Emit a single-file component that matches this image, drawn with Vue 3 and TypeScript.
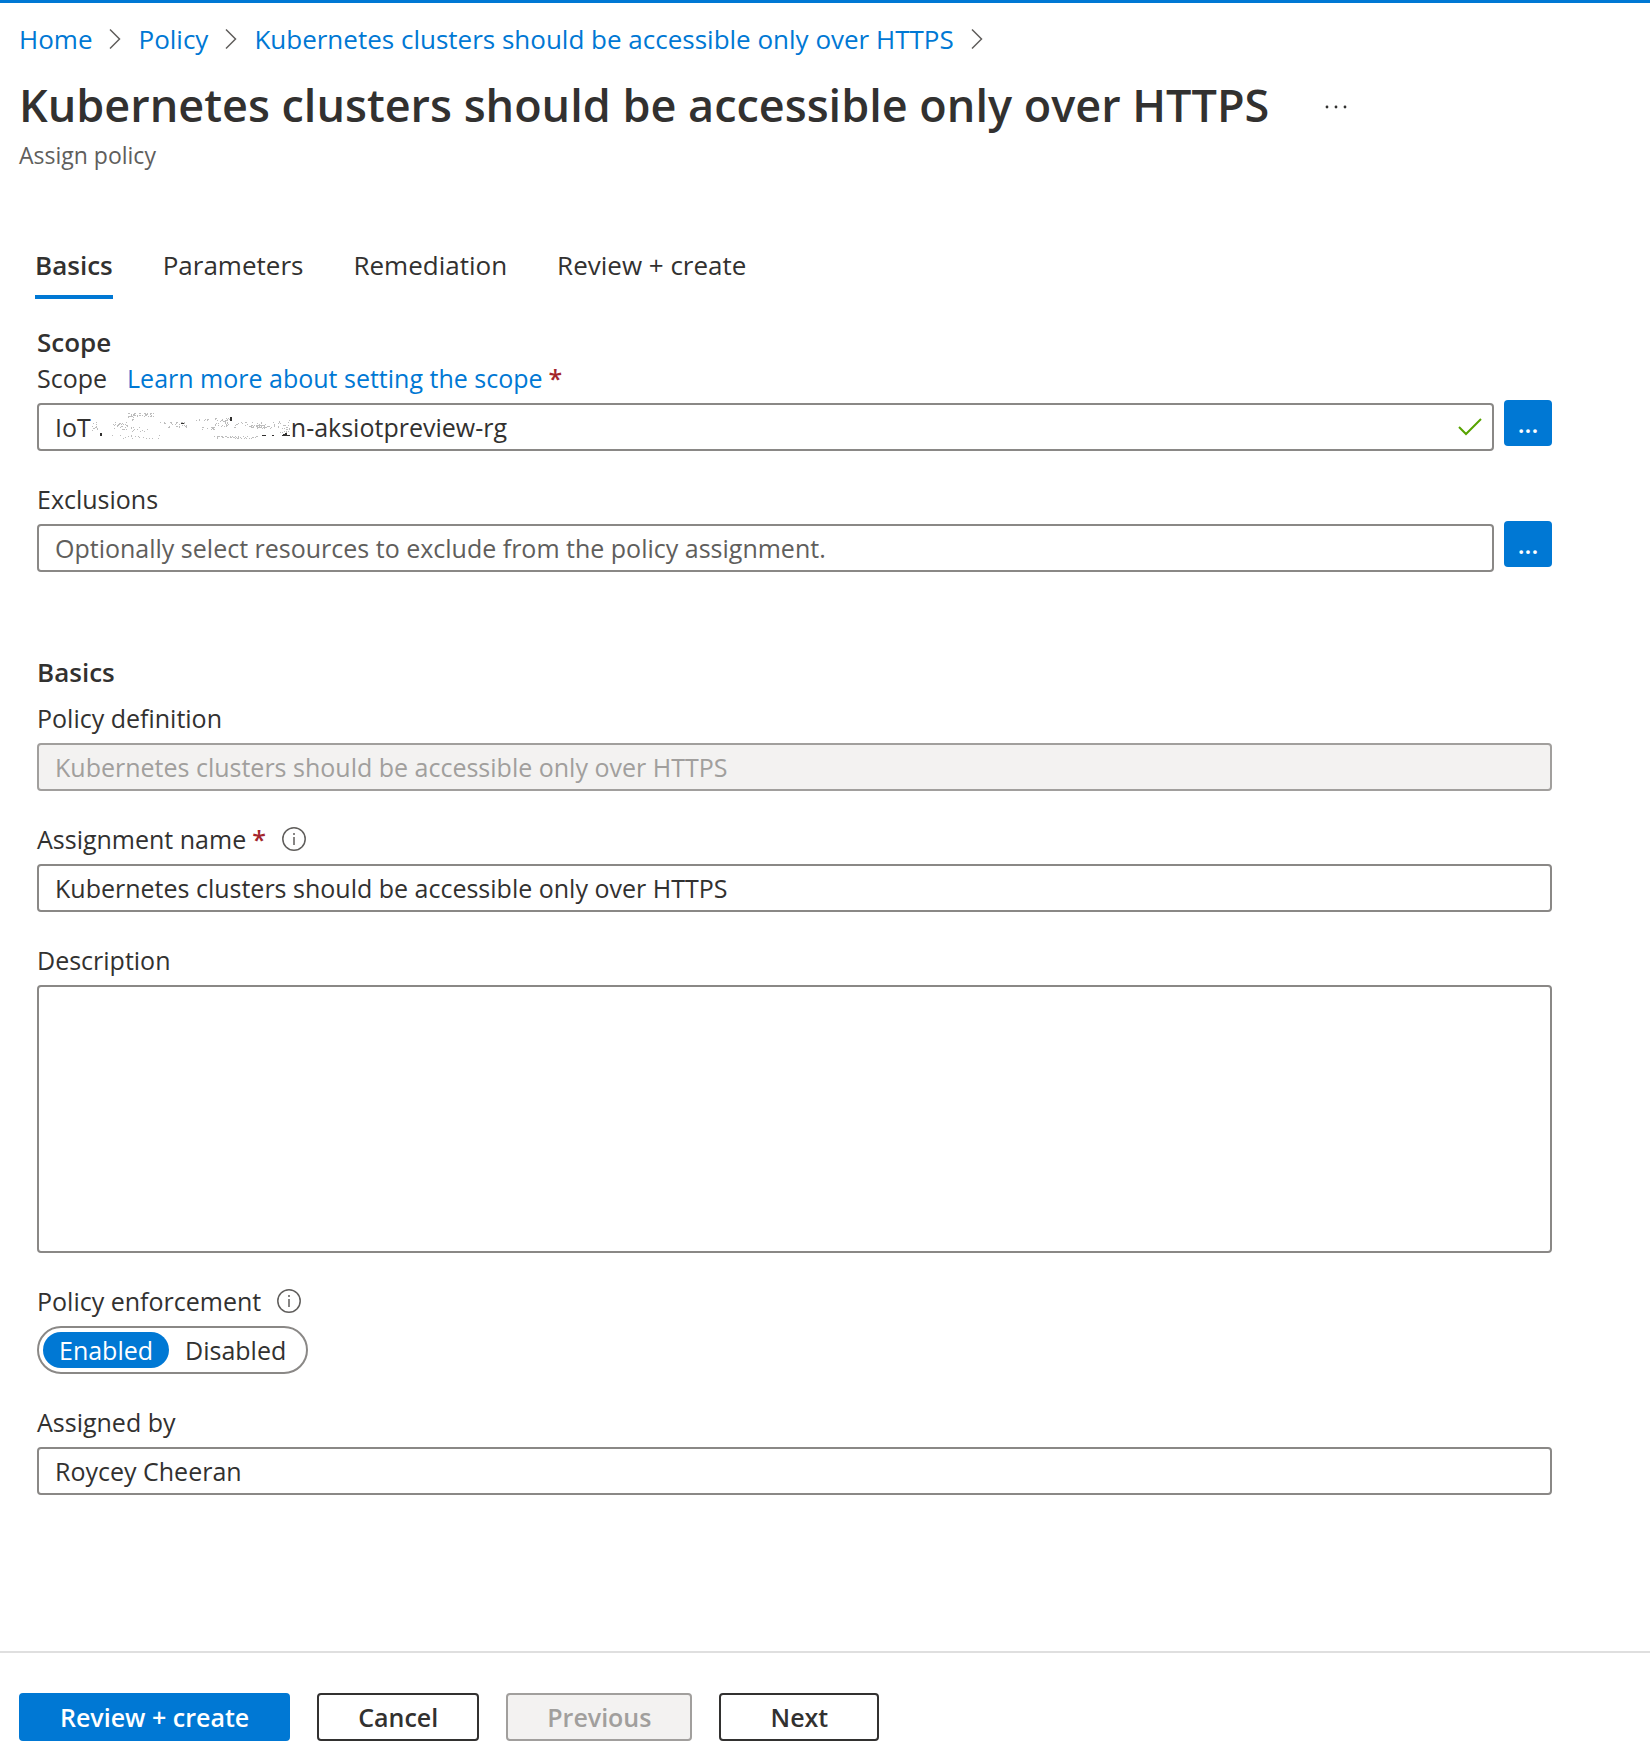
<script setup lang="ts">
import { ref } from 'vue'

interface Crumb { label: string; href: string }

const policyName = 'Kubernetes clusters should be accessible only over HTTPS'
const crumbs: Crumb[] = [
  { label: 'Home', href: '#home' },
  { label: 'Policy', href: '#policy' },
  { label: policyName, href: '#definition' },
]
const tabs: string[] = ['Basics', 'Parameters', 'Remediation', 'Review + create']
const activeTab = ref<string>('Basics')

const scopeTail = ref('n-aksiotpreview-rg')
const exclusions = ref('')
const assignmentName = ref(policyName)
const description = ref('')
const enforcement = ref<'Enabled' | 'Disabled'>('Enabled')
const assignedBy = ref('Roycey Cheeran')

// Eraser residue over the hidden part of the scope: [x, y, width, height, dot count]
const patches: number[][] = [
  [1, 10, 6, 9, 14], [22, 10, 15, 8, 30], [37, 1, 26, 4, 56], [37, 5, 6, 4, 6],
  [39, 15, 18, 5, 14], [21, 23, 48, 4, 18], [69, 10, 28, 6, 34], [105, 7, 14, 2, 8],
  [110, 15, 14, 3, 14], [124, 6, 15, 9, 42], [122, 24, 45, 3, 44], [143, 10, 41, 7, 42],
  [157, 13, 20, 3, 30], [187, 8, 12, 13, 28],
]
function speckles(): string {
  let seed = 7
  const next = (): number => {
    seed = (seed * 16807) % 2147483647
    return seed / 2147483647
  }
  return patches
    .map(([x, y, w, h, n]) =>
      Array.from({ length: n }, () => `M${x + Math.floor(next() * w)} ${y + Math.floor(next() * h)}h1v1h-1z`).join(''))
    .join('')
}
const residue = speckles()
</script>

<template>
  <div class="page">
    <header class="head">
      <nav class="crumbs" aria-label="Breadcrumb">
        <template v-for="c in crumbs" :key="c.label">
          <a :href="c.href">{{ c.label }}</a>
          <svg class="chev" width="12" height="22" viewBox="0 0 12 22" aria-hidden="true"><path d="M1 1.5 10.5 11 1 20.5" /></svg>
        </template>
      </nav>
      <div class="title-row">
        <h1>{{ policyName }}</h1>
        <button class="more" type="button" aria-label="More actions">
          <svg width="24" height="4" viewBox="0 0 24 4"><circle cx="3" cy="2" r="1.4" /><circle cx="12" cy="2" r="1.4" /><circle cx="21" cy="2" r="1.4" /></svg>
        </button>
      </div>
      <p class="subtitle">Assign policy</p>
    </header>

    <main class="body">
      <div class="tabs" role="tablist">
        <button v-for="t in tabs" :key="t" type="button" role="tab" class="tab" :class="{ active: t === activeTab }"
          :aria-selected="t === activeTab" @click="activeTab = t">{{ t }}</button>
      </div>

      <form class="form" @submit.prevent>
        <section class="scope">
          <h2>Scope</h2>
          <div class="fields">
            <div class="field">
              <div class="label-row">
                <label for="scope">Scope</label>
                <a class="learn" href="#learn">Learn more about setting the scope</a>
                <span class="req">*</span>
              </div>
              <div class="picker">
                <div class="box scope-box">
                  <span>IoT</span>
                  <svg class="residue" width="200" height="30" viewBox="0 0 200 30" aria-hidden="true">
                    <path :d="residue" fill="#bdbdbd" />
                    <path d="M9 21h2v3h-2zM139 5h2v4h-2zM171 23h4v1h-4zM181 23h2v1h-2zM90 11h3v1h-3zM191 23h1v-1h2v-1h2v2h3v1h-8z" fill="#323130" />
                  </svg>
                  <input id="scope" v-model="scopeTail" type="text" />
                  <svg class="check" width="24" height="18" viewBox="0 0 24 18" aria-hidden="true"><path d="M1 9 8 16 23 1" /></svg>
                </div>
                <button class="browse" type="button" aria-label="Browse scope">...</button>
              </div>
            </div>
            <div class="field">
              <div class="label-row"><label for="exclusions">Exclusions</label></div>
              <div class="picker">
                <input id="exclusions" v-model="exclusions" class="box" type="text" placeholder="Optionally select resources to exclude from the policy assignment." />
                <button class="browse" type="button" aria-label="Browse exclusions">...</button>
              </div>
            </div>
          </div>
        </section>

        <section class="basics">
          <h2>Basics</h2>
          <div class="fields">
            <div class="field">
              <div class="label-row"><label for="definition">Policy definition</label></div>
              <input id="definition" class="box" type="text" :value="policyName" disabled />
            </div>
            <div class="field">
              <div class="label-row">
                <label for="name">Assignment name</label>
                <span class="req">*</span>
                <svg class="info" width="24" height="24" viewBox="0 0 24 24" aria-hidden="true"><circle cx="12" cy="12" r="11.2" /><path d="M12 10v8M12 6v2" /></svg>
              </div>
              <input id="name" v-model="assignmentName" class="box" type="text" />
            </div>
            <div class="field">
              <div class="label-row"><label for="description">Description</label></div>
              <textarea id="description" v-model="description" class="box"></textarea>
            </div>
            <div class="field">
              <div class="label-row">
                <span id="enforcement">Policy enforcement</span>
                <svg class="info" width="24" height="24" viewBox="0 0 24 24" aria-hidden="true"><circle cx="12" cy="12" r="11.2" /><path d="M12 10v8M12 6v2" /></svg>
              </div>
              <div class="toggle" role="radiogroup" aria-labelledby="enforcement">
                <label v-for="o in (['Enabled', 'Disabled'] as const)" :key="o" :class="{ on: enforcement === o }">
                  <input v-model="enforcement" type="radio" name="enforcement" :value="o" />{{ o }}
                </label>
              </div>
            </div>
            <div class="field">
              <div class="label-row"><label for="assigned">Assigned by</label></div>
              <input id="assigned" v-model="assignedBy" class="box" type="text" />
            </div>
          </div>
        </section>
      </form>
    </main>

    <footer class="foot">
      <button class="btn primary" type="button">Review + create</button>
      <button class="btn" type="button">Cancel</button>
      <button class="btn" type="button" disabled>Previous</button>
      <button class="btn next" type="button">Next</button>
    </footer>
  </div>
</template>

<style>
body { margin: 0; background: #fff; }
</style>

<style scoped>
.page {
  box-sizing: border-box;
  min-height: 100vh;
  display: flex;
  flex-direction: column;
  border-top: 3px solid #0078d4;
  color: #323130;
  font-family: "Segoe UI", "Open Sans", "Noto Sans", sans-serif;
  font-size: 25px;
  line-height: 36px;
}
button, input, textarea { font: inherit; color: inherit; box-sizing: border-box; margin: 0; }
button { cursor: pointer; }
a { color: #0078d4; text-decoration: none; }
svg { flex: none; fill: none; }

.head { padding: 18px 19px 0; }
.crumbs { display: flex; align-items: center; gap: 17px; font-size: 26px; }
.chev { stroke: #605e5c; stroke-width: 1.5; }
.title-row { display: flex; align-items: center; gap: 55px; margin-top: 16px; }
h1 { margin: 0; font-size: 45px; line-height: 64px; font-weight: 600; }
.more { border: 0; padding: 4px 0 0; background: none; display: flex; }
.more svg { fill: #323130; }
.subtitle { margin: 0; color: #605e5c; font-size: 23px; }

.body { flex: 1; padding: 74px 98px 60px 37px; }
.tabs { display: flex; gap: 50px; margin-left: -2px; font-size: 26px; }
.tab { border: 0; border-bottom: 4px solid transparent; background: none; padding: 0 0 12px; }
.tab.active { font-weight: 600; border-color: #0078d4; }

.form { margin-top: 25px; }
h2 { margin: 0; font-size: 26px; line-height: 36px; font-weight: 600; }
.basics { margin-top: 82px; }
.basics h2 { margin-bottom: 10px; }
.fields { display: flex; flex-direction: column; gap: 30px; }
.field { display: flex; flex-direction: column; gap: 7px; }
.label-row { display: flex; align-items: center; height: 36px; }
.learn { margin-left: 20px; }
.req { margin-left: 6px; color: #a4262c; font-weight: 600; }
.info { margin-left: 16px; stroke: #605e5c; stroke-width: 1.5; }

.box {
  width: 100%;
  height: 48px;
  padding: 0 16px;
  border: 2px solid #8a8886;
  border-radius: 4px;
  background: #fff;
}
.box::placeholder { color: #605e5c; opacity: 1; }
.box:disabled { background: #f3f2f1; border-color: #a19f9d; color: #a19f9d; }
textarea.box { display: block; height: 268px; padding: 6px 16px; resize: none; }
.picker { display: flex; align-items: flex-start; gap: 10px; }
.picker .box { flex: 1; min-width: 0; }
.scope-box { box-sizing: border-box; display: flex; align-items: center; padding-right: 10px; }
.scope-box input { flex: 1; min-width: 0; border: 0; padding: 0; background: none; outline: none; }
.check { stroke: #57a300; stroke-width: 2; }
.browse {
  width: 48px;
  height: 46px;
  margin-top: -3px;
  padding: 0;
  border: 0;
  border-radius: 4px;
  background: #0078d4;
  color: #fff;
  font-weight: 600;
}

.toggle {
  align-self: flex-start;
  box-sizing: border-box;
  display: flex;
  height: 48px;
  padding: 4px;
  border: 2px solid #8a8886;
  border-radius: 24px;
}
.toggle label { padding: 0 16px; border-radius: 18px; cursor: pointer; }
.toggle label.on { background: #0078d4; color: #fff; }
.toggle input { position: absolute; opacity: 0; pointer-events: none; }

.foot { display: flex; gap: 27px; padding: 40px 19px 23px; border-top: 2px solid #dfdfdf; }
.btn {
  height: 48px;
  padding: 0 39px;
  border: 2px solid #323130;
  border-radius: 4px;
  background: #fff;
  font-weight: 600;
}
.btn.primary { background: #0078d4; border-color: #0078d4; color: #fff; }
.btn:disabled { background: #f3f2f1; border-color: #a19f9d; color: #a19f9d; }
.btn.next { min-width: 160px; }
</style>
